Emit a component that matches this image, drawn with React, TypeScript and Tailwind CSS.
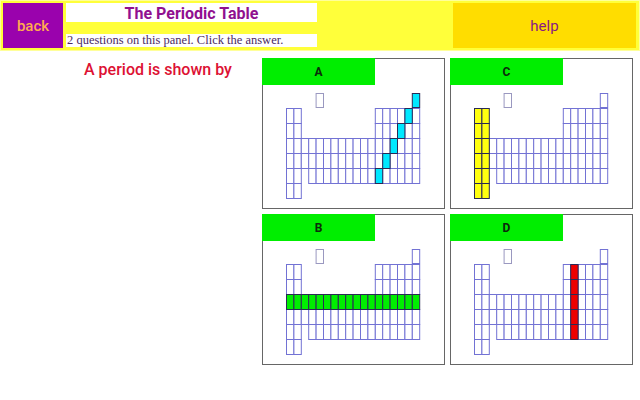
import React from 'react';

type Cell = [number, number]; // [col 1..18, row 0..6]

const COL_W = 7.4;
const ROW_H = 15;
const X0 = 23.5;
const Y0 = 8.5;

// layout of the little periodic table diagram
const buildCells = (): Cell[] => {
  const cells: Cell[] = [[5, 0], [18, 0]];
  for (const r of [1, 2]) {
    for (const c of [1, 2, 13, 14, 15, 16, 17, 18]) cells.push([c, r]);
  }
  for (const r of [3, 4]) {
    for (let c = 1; c <= 18; c++) cells.push([c, r]);
  }
  for (let c = 1; c <= 18; c++) if (c !== 3) cells.push([c, 5]);
  cells.push([1, 6], [2, 6]);
  return cells;
};

const CELLS = buildCells();

interface PanelProps {
  label: string;
  highlight: Cell[];
  fill: string;
}

const TableDiagram: React.FC<{ highlight: Cell[]; fill: string }> = ({ highlight, fill }) => {
  const isHi = (c: Cell) => highlight.some((h) => h[0] === c[0] && h[1] === c[1]);
  return (
    <svg width="181" height="121" viewBox="0 0 181 121" className="block">
      {CELLS.filter((c) => !isHi(c)).map(([c, r]) => (
        <rect
          key={`${c}-${r}`}
          x={X0 + (c - 1) * COL_W}
          y={Y0 + r * ROW_H}
          width={COL_W}
          height={r === 0 ? ROW_H - 1 : ROW_H}
          fill="white"
          stroke={r === 0 && c === 5 ? '#9a98c0' : '#7272d4'}
          strokeWidth="1"
        />
      ))}
      {highlight.map(([c, r]) => (
        <rect
          key={`h-${c}-${r}`}
          x={X0 + (c - 1) * COL_W}
          y={Y0 + r * ROW_H}
          width={COL_W}
          height={r === 0 ? ROW_H - 1 : ROW_H}
          fill={fill}
          stroke="#2a2a55"
          strokeWidth="1"
        />
      ))}
    </svg>
  );
};

const AnswerPanel: React.FC<PanelProps> = ({ label, highlight, fill }) => (
  <div className="flex flex-col w-[183px] h-[151px] border border-[#666666] bg-white">
    <div className="w-[113px] h-[27px] -mt-px -ml-px bg-[#00ee00] flex items-center justify-center text-[12px] font-bold text-[#0b2a0b] font-['Roboto',sans-serif]">
      {label}
    </div>
    <TableDiagram highlight={highlight} fill={fill} />
  </div>
);

export default function App() {
  const periodA: Cell[] = [[18, 0], [17, 1], [16, 2], [15, 3], [14, 4], [13, 5]];
  const groupC: Cell[] = [1, 2, 3, 4, 5, 6].flatMap((r) => [[1, r] as Cell, [2, r] as Cell]);
  const rowB: Cell[] = Array.from({ length: 18 }, (_, i) => [i + 1, 3] as Cell);
  const colD: Cell[] = [1, 2, 3, 4, 5].map((r) => [14, r] as Cell);

  return (
    <div className="w-[640px] h-[400px] bg-white overflow-hidden font-['Roboto',sans-serif]">
      {/* Top bar */}
      <div className="h-[51px] bg-[#ffff3a] border border-[#ffff99] flex items-start pt-[2px] pl-[2px] pr-[3px]">
        <button className="w-[60px] h-[45px] pt-[2px] bg-[#9a02ad] text-[#ffab4f] text-[15px] font-medium flex items-center justify-center">
          back
        </button>
        <div className="flex flex-col ml-[3px] w-[251px]">
          <div className="h-[19px] pt-[3px] bg-white flex items-center justify-center text-[16px] font-bold text-[#90108f]">
            The Periodic Table
          </div>
          <div className="mt-[12px] h-[13px] bg-white flex items-center pl-[1px] text-[12.5px] leading-none text-[#4b2a63] font-['Liberation_Serif',serif]">
            2 questions on this panel. Click the answer.
          </div>
        </div>
        <div className="flex-1" />
        <button className="w-[183px] h-[45px] pt-[2px] bg-[#ffdd00] text-[#8a1a84] text-[15px] flex items-center justify-center">
          help
        </button>
      </div>

      {/* Body */}
      <div className="flex pt-[7px]">
        <div className="w-[262px] pl-[84px] pt-[2px]">
          <div className="text-[16px] font-medium text-[#dd1133] leading-[20px]">A period is shown by</div>
        </div>
        <div className="grid grid-cols-[183px_183px] gap-x-[5px] gap-y-[5px]">
          <AnswerPanel label="A" highlight={periodA} fill="#00e8ff" />
          <AnswerPanel label="C" highlight={groupC} fill="#ffff10" />
          <AnswerPanel label="B" highlight={rowB} fill="#00ee00" />
          <AnswerPanel label="D" highlight={colD} fill="#ee0000" />
        </div>
      </div>
    </div>
  );
}
